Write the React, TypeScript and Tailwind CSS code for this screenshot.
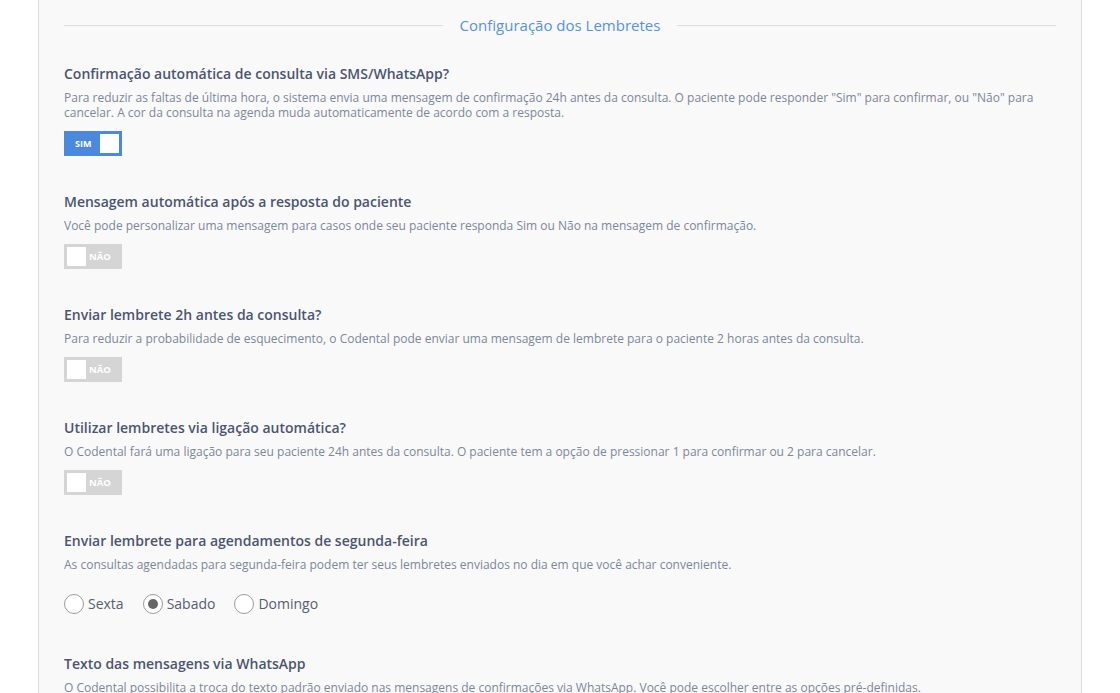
import React from "react";

const font = { fontFamily: '"Open Sans", "Noto Sans", sans-serif' };

function Toggle({ on }: { on: boolean }) {
  if (on) {
    return (
      <div className="mt-[11px] flex h-[25px] w-[58px] items-center justify-between bg-[#4a89dc] p-[3px] pl-[11px]">
        <span className="text-[9px] font-bold leading-none text-white">SIM</span>
        <span className="h-[19px] w-[19px] bg-white" />
      </div>
    );
  }
  return (
    <div className="mt-[11px] flex h-[25px] w-[58px] items-center gap-[3px] bg-[#d5d5d5] p-[3px]">
      <span className="h-[19px] w-[19px] bg-white" />
      <span className="text-[9.5px] font-bold leading-none text-white">NÃO</span>
    </div>
  );
}

function Section({
  title,
  desc,
  children,
}: {
  title: string;
  desc: string;
  children?: React.ReactNode;
}) {
  return (
    <div className="mb-[36px]">
      <h3 className="text-[14px] font-semibold leading-[20px] text-[#4b5570]">{title}</h3>
      <p className="mt-[6px] text-[12px] leading-[15px] text-[#7c879a]">{desc}</p>
      {children}
    </div>
  );
}

function Radio({ label, checked }: { label: string; checked?: boolean }) {
  return (
    <label className="flex items-center gap-[4px]">
      <span className="flex h-[20px] w-[20px] items-center justify-center rounded-full border border-[#9a9a9a] bg-white">
        {checked && <span className="h-[10px] w-[10px] rounded-full bg-[#666]" />}
      </span>
      <span className="text-[14px] leading-[20px] text-[#555e72]">{label}</span>
    </label>
  );
}

export default function App() {
  return (
    <div className="min-h-screen bg-white" style={font}>
      <div className="ml-[38px] min-h-[693px] w-[1044px] border-x border-[#dddddd] bg-[#f9f9f9] px-[25px] pt-[14px]">
        <div className="flex items-center">
          <div className="h-px flex-1 bg-[#dddddd]" />
          <span className="px-[17px] text-[15px] leading-[22px] text-[#5592e0]">
            Configuração dos Lembretes
          </span>
          <div className="h-px flex-1 bg-[#dddddd]" />
        </div>

        <div className="mt-[28px]">
          <Section
            title="Confirmação automática de consulta via SMS/WhatsApp?"
            desc={
              'Para reduzir as faltas de última hora, o sistema envia uma mensagem de confirmação 24h antes da consulta. O paciente pode responder "Sim" para confirmar, ou "Não" para cancelar. A cor da consulta na agenda muda automaticamente de acordo com a resposta.'
            }
          >
            <Toggle on />
          </Section>

          <Section
            title="Mensagem automática após a resposta do paciente"
            desc="Você pode personalizar uma mensagem para casos onde seu paciente responda Sim ou Não na mensagem de confirmação."
          >
            <Toggle on={false} />
          </Section>

          <Section
            title="Enviar lembrete 2h antes da consulta?"
            desc="Para reduzir a probabilidade de esquecimento, o Codental pode enviar uma mensagem de lembrete para o paciente 2 horas antes da consulta."
          >
            <Toggle on={false} />
          </Section>

          <Section
            title="Utilizar lembretes via ligação automática?"
            desc="O Codental fará uma ligação para seu paciente 24h antes da consulta. O paciente tem a opção de pressionar 1 para confirmar ou 2 para cancelar."
          >
            <Toggle on={false} />
          </Section>

          <div className="mb-[40px]">
            <h3 className="text-[14px] font-semibold leading-[20px] text-[#4b5570]">
              Enviar lembrete para agendamentos de segunda-feira
            </h3>
            <p className="mt-[6px] text-[12px] leading-[15px] text-[#7c879a]">
              As consultas agendadas para segunda-feira podem ter seus lembretes enviados no dia em que você achar conveniente.
            </p>
            <div className="mt-[22px] flex items-center gap-[19px]">
              <Radio label="Sexta" />
              <Radio label="Sabado" checked />
              <Radio label="Domingo" />
            </div>
          </div>

          <Section
            title="Texto das mensagens via WhatsApp"
            desc="O Codental possibilita a troca do texto padrão enviado nas mensagens de confirmações via WhatsApp. Você pode escolher entre as opções pré-definidas."
          />
        </div>
      </div>
    </div>
  );
}
